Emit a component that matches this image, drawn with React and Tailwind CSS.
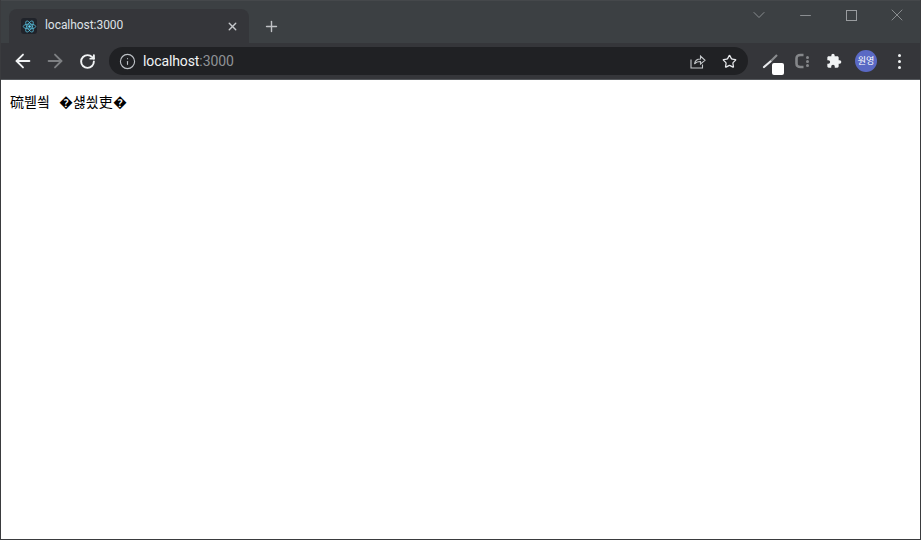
import React from 'react';
import { ArrowLeft, ArrowRight, RotateCw, Info, Star, Plus, X, ChevronDown, Minus } from 'lucide-react';

const ReactLogo = () => (
  <div className="w-[16px] h-[16px] rounded-[3px] bg-[#20232a] flex items-center justify-center">
    <svg width="15" height="15" viewBox="-12 -12 24 24" fill="none" stroke="#61dafb" strokeWidth="1">
      <circle r="2" fill="#61dafb" stroke="none" />
      <ellipse rx="10" ry="4" />
      <ellipse rx="10" ry="4" transform="rotate(60)" />
      <ellipse rx="10" ry="4" transform="rotate(120)" />
    </svg>
  </div>
);

const ShareIcon = () => (
  <svg width="16" height="15" viewBox="0 0 16 15" fill="none" stroke="#c4c7ca" strokeWidth="1.100">
    <path d="M1 5.500 V14 H12.500 V10.500" />
    <path d="M4.500 10 C5 6.500 8 5 10.500 5 V2 L15 6.300 L10.500 10 V7.500 C8 7.500 6 8 4.500 10 Z" />
  </svg>
);

const PuzzleIcon = () => (
  <svg width="16" height="16" viewBox="0 0 24 24" fill="#f1f3f4">
    <path d="M20.500 11H19V7c0-1.100-.9-2-2-2h-4V3.500a2.500 2.500 0 0 0-5 0V5H4c-1.100 0-2 .9-2 2v3.800h1.500a2.700 2.700 0 0 1 0 5.400H2V20c0 1.100.9 2 2 2h3.800v-1.500a2.700 2.700 0 0 1 5.400 0V22H17c1.100 0 2-.9 2-2v-4h1.500a2.500 2.500 0 0 0 0-5z" />
  </svg>
);

const PenIcon = () => (
  <svg width="18" height="16" viewBox="0 0 18 16" fill="none">
    <path d="M2 14 L9 8" stroke="#e8eaed" strokeWidth="2.200" strokeLinecap="round" />
    <path d="M9 8 L15 2" stroke="#8a8c8f" strokeWidth="2.200" />
  </svg>
);

const CIcon = () => (
  <div className="flex items-center gap-[2px]">
    <svg width="9" height="16" viewBox="0 0 9 16" fill="none" stroke="#85878a" strokeWidth="2.600">
      <path d="M8.500 2 H5.500 Q1.500 2 1.500 5.500 V10.500 Q1.500 14 5.500 14 H8.500" />
    </svg>
    <div className="flex flex-col gap-[1px]">
      <div className="w-[3px] h-[3px] rounded-full bg-[#85878a]" />
      <div className="w-[3px] h-[3px] rounded-full bg-[#85878a]" />
      <div className="w-[3px] h-[3px] rounded-full bg-[#85878a]" />
    </div>
  </div>
);

const App = () => {
  return (
    <div className="w-[921px] h-[540px] flex flex-col bg-white border border-t-0 border-[#3a3b3e] overflow-hidden font-['Roboto','Noto_Sans',sans-serif]">
      {/* title bar */}
      <div className="h-[43px] shrink-0 bg-[#3c4043] flex items-end pl-[8px] border-t border-t-[#45484b]">
        <div className="w-[240px] h-[34px] bg-[#35363a] rounded-t-[8px] flex items-center pl-[12px] pr-[10px] gap-[8px]">
          <ReactLogo />
          <span className="flex-1 text-[12px] tracking-[-0.05px] pb-[2px] text-[#dee1e6]">localhost:3000</span>
          <X size={13} strokeWidth={2.500} className="text-[#c6c8cb]" />
        </div>
        <div className="h-[34px] ml-[14px] flex items-center">
          <Plus size={17} strokeWidth={2} className="text-[#c0c2c5]" />
        </div>
        <div className="flex-1 h-full flex items-start justify-end text-[#999c9f]">
          <div className="w-[46px] h-[28px] flex items-center justify-center">
            <ChevronDown size={20} strokeWidth={1} />
          </div>
          <div className="w-[46px] h-[28px] flex items-center justify-center">
            <Minus size={17} strokeWidth={1.200} />
          </div>
          <div className="w-[46px] h-[28px] flex items-center justify-center">
            <div className="w-[11px] h-[11px] border border-[#999c9f]" />
          </div>
          <div className="w-[46px] h-[28px] flex items-center justify-center">
            <X size={20} strokeWidth={1} />
          </div>
        </div>
      </div>

      {/* toolbar */}
      <div className="h-[36px] shrink-0 bg-[#35363a] flex items-center pl-[11px]">
        <ArrowLeft size={22} strokeWidth={2} className="text-[#f1f3f4]" />
        <ArrowRight size={22} strokeWidth={2} className="ml-[10px] text-[#7e8083]" />
        <RotateCw size={17} strokeWidth={2.700} className="ml-[13px] text-[#f1f3f4]" />
        <div className="ml-[13px] w-[639px] h-[28px] rounded-full bg-[#202124] flex items-center pl-[10px] pr-[11px]">
          <Info size={17} strokeWidth={1.600} className="text-[#bdc1c6]" />
          <span className="ml-[7px] flex-1 text-[14px] tracking-[-0.1px] text-[#f1f3f4]">
            localhost<span className="text-[#8f9296]">:3000</span>
          </span>
          <ShareIcon />
          <Star size={15} strokeWidth={2} className="ml-[16px] text-[#e8eaed]" />
        </div>
        <div className="ml-[14px] relative w-[18px] h-[16px]">
          <PenIcon />
          <div className="absolute left-[10px] top-[10px] w-[12px] h-[12px] rounded-[2px] bg-white" />
        </div>
        <div className="ml-[15px]">
          <CIcon />
        </div>
        <div className="ml-[17px]">
          <PuzzleIcon />
        </div>
        <div className="ml-[13px] w-[22px] h-[22px] rounded-full bg-[#5a69c4] flex items-center justify-center text-[9px] text-white font-['Noto_Sans_CJK_KR',sans-serif]">
          원영
        </div>
        <div className="ml-[21px] flex flex-col gap-[3px]">
          <div className="w-[3px] h-[3px] rounded-full bg-[#f1f3f4]" />
          <div className="w-[3px] h-[3px] rounded-full bg-[#f1f3f4]" />
          <div className="w-[3px] h-[3px] rounded-full bg-[#f1f3f4]" />
        </div>
      </div>

      {/* page */}
      <div className="flex-1 bg-white border-t border-t-[#55585c] pt-[12px] pl-[9px] text-[14px] leading-[18px] [word-spacing:6px] text-black font-['Noto_Sans_CJK_KR',sans-serif]">
        硫붿씤 �섏씠吏�
      </div>
    </div>
  );
};

export default App;
